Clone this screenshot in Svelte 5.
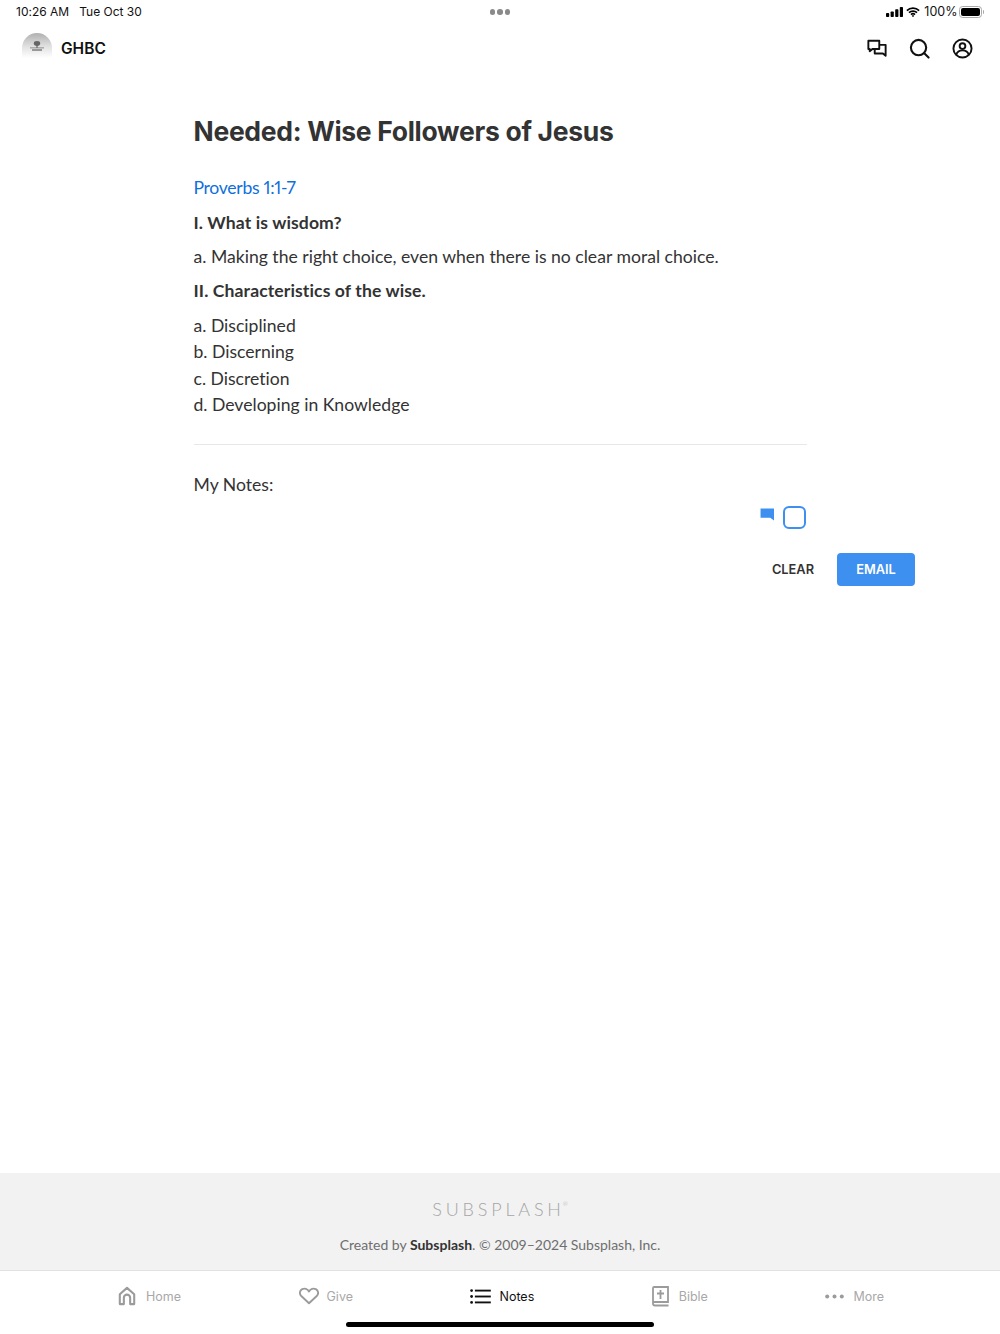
<script>
  const tabs = [
    { label: 'Home', active: false },
    { label: 'Give', active: false },
    { label: 'Notes', active: true },
    { label: 'Bible', active: false },
    { label: 'More', active: false }
  ];
</script>

<div class="page">
  <div class="statusbar">
    <div class="time"><span>10:26 AM</span><span>Tue Oct 30</span></div>
    <div class="dots"><i></i><i></i><i></i></div>
    <div class="status-right">
      <svg width="17" height="10" viewBox="0 0 17 10" fill="#000"><rect x="0" y="6" width="3.2" height="4" rx=".8"/><rect x="4.6" y="4.5" width="3.2" height="5.5" rx=".8"/><rect x="9.2" y="2.2" width="3.2" height="7.8" rx=".8"/><rect x="13.8" y="0" width="3.2" height="10" rx=".8"/></svg>
      <svg width="14" height="10" viewBox="0 0 16 11" fill="none" stroke="#000" stroke-width="1.9"><path d="M1 4a10 10 0 0 1 14 0"/><path d="M3.4 6.3a6.6 6.6 0 0 1 9.2 0"/><path d="M5.7 8.5a3.4 3.4 0 0 1 4.6 0"/><circle cx="8" cy="10" r=".6" fill="#000" stroke-width="1"/></svg>
      <span class="pct">100%</span>
      <div class="battery"><div class="cell"></div></div>
      <div class="nub"></div>
    </div>
  </div>

  <header class="nav">
    <div class="brand">
      <svg class="logo" width="32" height="28" viewBox="0 0 32 28">
        <defs><linearGradient id="lg" x1="0" y1="0" x2="0" y2="1"><stop offset="0" stop-color="#b0b0b0"/><stop offset=".55" stop-color="#e2e2e2"/><stop offset="1" stop-color="#ffffff"/></linearGradient></defs>
        <path d="M1 17a15 15 0 0 1 30 0v10H1z" fill="url(#lg)"/>
        <ellipse cx="16" cy="12.500" rx="3.200" ry="2.400" fill="#666"/>
        <rect x="15.4" y="14" width="1.200" height="3" fill="#666"/>
        <rect x="9" y="16.500" width="14" height=".8" fill="#777"/>
        <rect x="11" y="18" width="10" height="2" fill="#999"/>
      </svg>
      <span class="brand-name">GHBC</span>
    </div>
    <div class="nav-icons">
      <svg width="20" height="19" viewBox="0 0 22 20" fill="none" stroke="#111" stroke-width="2.100" stroke-linejoin="round"><path d="M1.500 1.500h12v9H6l-3 2.500v-2.500H1.500z"/><path d="M14 6h6.500v9.500V18l-3-2.500H8.500V11"/></svg>
      <svg width="21" height="21" viewBox="0 0 22 22" fill="none" stroke="#111" stroke-width="2.200" stroke-linecap="round"><circle cx="10" cy="10" r="8"/><path d="M16 16l4.500 4.500"/></svg>
      <svg width="21" height="21" viewBox="0 0 22 22" fill="none" stroke="#111" stroke-width="2"><circle cx="11" cy="11" r="9.500"/><circle cx="11" cy="8.500" r="3"/><path d="M4.500 17.500c1-3.500 3.500-4.500 6.500-4.500s5.500 1 6.500 4.500"/></svg>
    </div>
  </header>

  <main class="content">
    <h1>Needed: Wise Followers of Jesus</h1>
    <a class="ref" href="#top">Proverbs 1:1-7</a>
    <p class="heading">I. What is wisdom?</p>
    <p class="line">a. Making the right choice, even when there is no clear moral choice.</p>
    <p class="heading">II. Characteristics of the wise.</p>
    <ul>
      <li>a. Disciplined</li>
      <li>b. Discerning</li>
      <li>c. Discretion</li>
      <li>d. Developing in Knowledge</li>
    </ul>
    <hr />
    <p class="notes-label">My Notes:</p>
    <div class="note-tools">
      <svg class="flag" width="15" height="13" viewBox="0 0 15 14" fill="#3d8ff0"><path d="M0 0.500h14.500V13.500L10.500 10.500H0z"/></svg>
      <div class="check"></div>
    </div>
  </main>

  <div class="actions">
    <button class="clear">CLEAR</button>
    <button class="email">EMAIL</button>
  </div>

  <div class="spacer"></div>

  <footer class="foot">
    <div class="wordmark">SUBSPLASH<sup>®</sup></div>
    <div class="copy">Created by <b>Subsplash</b>. © 2009–2024 Subsplash, Inc.</div>
  </footer>

  <nav class="tabbar">
    {#each tabs as t}
      <div class="tab tab-{t.label.toLowerCase()}" class:active={t.active}>
        {#if t.label === 'Home'}
          <svg width="18" height="20" viewBox="0 0 20 21" fill="none" stroke="#9b9b9b" stroke-width="2.300" stroke-linejoin="round"><path d="M2 19.500V8.500L10 1.500l8 7v11h-4.500v-7a3.500 3.500 0 0 0-7 0v7z"/></svg>
        {:else if t.label === 'Give'}
          <svg width="20" height="18" viewBox="0 0 22 19" fill="none" stroke="#9b9b9b" stroke-width="2.100" stroke-linejoin="round"><path d="M11 17.500L2.500 9.500C0 7 .8 3.300 3.500 2 6 .8 9.500 1.500 11 4.500 12.500 1.500 16 .8 18.500 2c2.700 1.300 3.500 5 1 7.500z"/></svg>
        {:else if t.label === 'Notes'}
          <svg width="21" height="15" viewBox="0 0 22 16" fill="#111"><circle cx="1.500" cy="1.700" r="1.500"/><circle cx="1.500" cy="8" r="1.500"/><circle cx="1.500" cy="14.300" r="1.500"/><rect x="5" y="0.700" width="17" height="2"/><rect x="5" y="7" width="17" height="2"/><rect x="5" y="13.300" width="17" height="2"/></svg>
        {:else if t.label === 'Bible'}
          <svg width="17" height="21" viewBox="0 0 17 21" fill="none" stroke="#9b9b9b" stroke-width="1.800"><path d="M1 17V2.200C1 1.500 1.500 1 2.200 1H16v15H2.500C1.500 16 1 16.800 1 17.500 1 18.700 1.800 19.500 3 19.500h13.500"/><path d="M8.500 4v9M5 7.500h7"/></svg>
        {:else}
          <svg width="19" height="5" viewBox="0 0 19 5" fill="#9b9b9b"><circle cx="2.200" cy="2.500" r="2"/><circle cx="9.500" cy="2.500" r="2"/><circle cx="16.800" cy="2.500" r="2"/></svg>
        {/if}
        <span>{t.label}</span>
      </div>
    {/each}
    <div class="home-indicator"></div>
  </nav>
</div>

<style>
  :global(body) { margin: 0; background: #fff; }
  .page {
    width: 1000px; height: 1334px; display: flex; flex-direction: column;
    font-family: "Lato", "Liberation Sans", sans-serif; color: #333; overflow: hidden; position: relative;
    font-variant-ligatures: none;
  }
  .statusbar {
    height: 24px; box-sizing: border-box; padding: 0 16px 1px 16px; display: flex; align-items: center; justify-content: space-between;
    position: relative; font-size: 12px; color: #111;
    font-family: "Inter", "Liberation Sans", sans-serif;
  }
  .time { display: flex; gap: 10px; }
  .dots { position: absolute; left: 489.500px; top: 9px; display: flex; gap: 2px; }
  .dots i { width: 5.500px; height: 5.500px; border-radius: 50%; background: #8a8a8a; display: block; }
  .status-right { display: flex; align-items: center; gap: 3px; }
  .pct { margin-left: 1px; margin-right: -1.500px; font-size: 12.500px; }
  .battery { width: 23px; height: 12px; border: 1px solid #aaa; border-radius: 3.500px; padding: 1px; box-sizing: border-box; }
  .cell { width: 100%; height: 100%; background: #000; border-radius: 2px; }
  .nub { width: 1.500px; height: 4px; background: #aaa; margin-left: -2.500px; border-radius: 0 1px 1px 0; }

  .nav {
    height: 48px; display: flex; align-items: center; justify-content: space-between;
    padding: 0 27.500px 0 21px;
  }
  .brand { display: flex; align-items: center; gap: 8px; }
  .logo { margin-top: -6px; }
  .brand-name { font-size: 15.500px; font-weight: 600; color: #111; font-family: "Inter", sans-serif; }
  .nav-icons { display: flex; align-items: center; gap: 22px; }

  .content { width: 613px; margin-left: 193.500px; display: flex; flex-direction: column; }
  h1 { margin: 43px 0 0; font-size: 26.500px; line-height: 32px; font-weight: 700; color: #333; letter-spacing: -0.300px; font-family: "Inter", sans-serif; }
  .ref { margin-top: 28px; font-size: 17.600px; line-height: 26px; color: #0f6fdc; text-decoration: none; font-variant-numeric: proportional-nums; letter-spacing: -0.300px; }
  .heading { margin: 8.500px 0 0; font-size: 17.600px; line-height: 26px; font-weight: 700; color: #333; letter-spacing: 0.100px; }
  .line { margin: 8.500px 0 0; font-size: 17.600px; line-height: 26px; color: #333; }
  .line + .heading { margin-top: 7.500px; }
  ul { list-style: none; margin: 9.500px 0 0; padding: 0; font-size: 17.600px; line-height: 26.400px; }
  hr { border: 0; border-top: 1px solid #e8e8e8; margin: 25px 0 0; width: 100%; }
  .notes-label { margin: 27px 0 0; font-size: 17.600px; line-height: 26px; }
  .note-tools { display: flex; justify-content: flex-end; align-items: flex-start; gap: 8px; margin-top: 8px; height: 26px; padding-right: 1px; }
  .flag { margin-top: 2px; }
  .check { width: 19px; height: 19px; border: 2px solid #3d8ff0; border-radius: 6px; }

  .actions { display: flex; justify-content: flex-end; align-items: center; padding-right: 85px; margin-top: 21px; gap: 23px; }
  button { font-family: "Inter", sans-serif; font-size: 12.800px; font-weight: 600; border: 0; background: none; padding: 0; cursor: pointer; }
  .clear { color: #333; }
  .email { width: 78px; height: 33px; background: #3d8ff0; color: #fff; border-radius: 4px; }

  .spacer { flex: 1; }

  .foot {
    height: 97px; background: #f2f2f2; display: flex; flex-direction: column; align-items: center;
  }
  .wordmark { margin-top: 26px; font-size: 18px; line-height: 20px; letter-spacing: 3.800px; color: #a5a5a5; font-weight: 300; position: relative; padding-right: 3px; }
  .wordmark sup { position: absolute; font-size: 6px; line-height: 8px; top: 1px; right: 0; letter-spacing: 0; }
  .copy { margin-top: 16px; font-size: 14px; line-height: 20px; color: #6e6e6e; }
  .copy b { color: #333; font-weight: 700; }

  .tabbar {
    height: 64px; border-top: 1px solid #e2e2e2; box-sizing: border-box; display: flex; justify-content: space-between; position: relative;
    padding: 0 116px 0 118px;
  }
  .tab { height: 50px; display: flex; align-items: center; gap: 9px; font-size: 12.500px; color: #a8a8a8; font-family: "Inter", sans-serif; }
  .tab-home, .tab-bible { gap: 10px; }
  .tab-give, .tab-notes { gap: 8px; }
  .tab.active { color: #111; }
  .home-indicator { position: absolute; left: 346px; top: 51px; width: 308px; height: 5px; background: #000; border-radius: 3px; }
</style>
